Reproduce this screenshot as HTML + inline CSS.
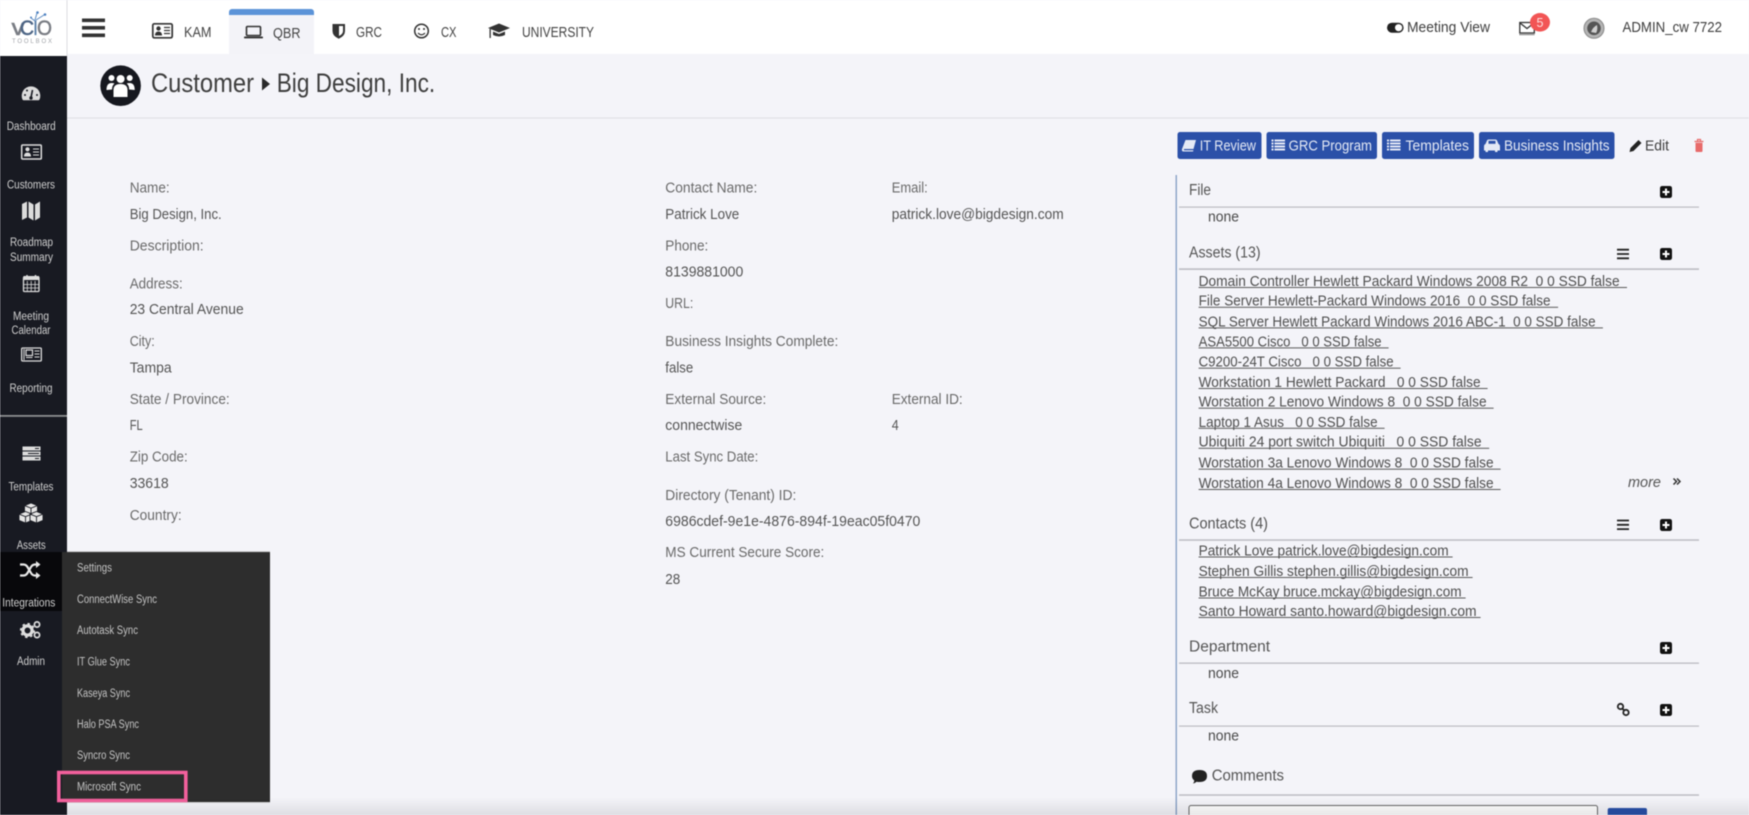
<!DOCTYPE html>
<html lang="en">
<head>
<meta charset="utf-8">
<title>Customer - Big Design, Inc.</title>
<style>
html,body{margin:0;padding:0;width:1749px;height:815px;overflow:hidden;background:#f4f4f9}
svg{display:block;filter:blur(.55px)}
text{font-family:"Liberation Sans",Arial,sans-serif;font-size:14.5px;fill:#5c5c5c;white-space:pre}
.l{fill:#6a6a6a}
.v{fill:#555}
.t{font-size:15.5px;fill:#555}
.n{font-size:14.5px;fill:#4a4a4a}
.tab{font-size:14.5px;fill:#444}
.top{font-size:14.5px;fill:#3e3e3e}
.h{font-size:27px;fill:#3e3e3e}
.s{font-size:11.5px;fill:#cfcfcf;text-anchor:start}
.d{font-size:11.5px;fill:#c4c4c4}
.b{font-size:15px;fill:#e4e9f5}
.a{font-size:14.5px;fill:#4f4f4f}
</style>
</head>
<body>
<svg width="1749" height="815" viewBox="0 0 1749 815" xmlns="http://www.w3.org/2000/svg">
<rect width="1749" height="815" fill="#f4f4f9"/>
<!-- top bar -->
<rect width="1749" height="54" fill="#fff"/>
<rect x="0" y="0" width="67" height="56" fill="#fff"/>
<rect x="66.500" y="0" width="1" height="56" fill="#dcdce0"/>
<!-- logo -->
<text x="11.500" y="35" textLength="13" lengthAdjust="spacingAndGlyphs" style="font-size:22px;fill:#7a7d84;stroke:#7a7d84;stroke-width:.5">v</text>
<text x="20" y="35" textLength="14" lengthAdjust="spacingAndGlyphs" style="font-size:21px;fill:#4d6585;stroke:#4d6585;stroke-width:.5">C</text>
<text x="33" y="35" textLength="5" lengthAdjust="spacingAndGlyphs" style="font-size:21px;fill:#5a7fa8;stroke:#5a7fa8;stroke-width:.3">I</text>
<text x="37" y="35" textLength="15" lengthAdjust="spacingAndGlyphs" style="font-size:21px;fill:#7a7d84;stroke:#7a7d84;stroke-width:.5">O</text>
<path d="M35 20 L37 13 M36 20 L44 15 M31 18 L35 21" stroke="#5b8ac0" stroke-width="1" fill="none"/>
<circle cx="37.500" cy="12.500" r="1.300" fill="#4a7fc0"/><circle cx="45" cy="14.500" r="1.300" fill="#4a7fc0"/><circle cx="31" cy="17.500" r="1" fill="#4a7fc0"/>
<text x="12" y="43" textLength="40" lengthAdjust="spacing" style="font-size:6px;fill:#a0a3a8">TOOLBOX</text>
<!-- hamburger -->
<rect x="82" y="18.500" width="23" height="3.600" fill="#333"/><rect x="82" y="26" width="23" height="3.600" fill="#333"/><rect x="82" y="33.500" width="23" height="3.600" fill="#333"/>
<!-- KAM -->
<rect x="152.800" y="23.800" width="19.400" height="14" rx="1.500" fill="none" stroke="#333" stroke-width="1.700"/>
<circle cx="158.500" cy="28.500" r="2.200" fill="#333"/><path d="M155 35.500 q0-4 3.500-4 t3.500 4z" fill="#333"/>
<path d="M164 27.500h6M164 30.500h6M164 33.500h6" stroke="#333" stroke-width="1.200"/>
<text class="tab" x="184" y="37" textLength="27.500" lengthAdjust="spacingAndGlyphs">KAM</text>
<!-- QBR tab -->
<rect x="229" y="15" width="85" height="39" fill="#f3f3f8"/>
<path d="M229 15 v-3 a3 3 0 0 1 3-3 h79 a3 3 0 0 1 3 3 v3z" fill="#5b93d8"/>
<rect x="246.500" y="26.500" width="14" height="9" rx="1" fill="none" stroke="#333" stroke-width="1.600"/>
<rect x="244" y="36.500" width="19" height="1.900" rx=".8" fill="#333"/>
<text class="tab" x="273" y="38" textLength="27.500" lengthAdjust="spacingAndGlyphs">QBR</text>
<!-- GRC -->
<path d="M332.500 24 h12.500 v7 q0 5-6.250 7.700 q-6.250-2.700-6.250-7.700z" fill="#333"/>
<path d="M339 26 h4 v5 q0 3-4 5z" fill="#fff"/>
<text class="tab" x="356" y="37" textLength="26" lengthAdjust="spacingAndGlyphs">GRC</text>
<!-- CX -->
<circle cx="421.500" cy="31" r="6.800" fill="none" stroke="#333" stroke-width="1.500"/>
<circle cx="419" cy="29" r="1" fill="#333"/><circle cx="424" cy="29" r="1" fill="#333"/>
<path d="M418 33 q3.500 3.500 7 0" fill="none" stroke="#333" stroke-width="1.200"/>
<text class="tab" x="441" y="37" textLength="15.500" lengthAdjust="spacingAndGlyphs">CX</text>
<!-- University -->
<path d="M488 28 L499 23.500 L510 28 L499 32.500z" fill="#333"/>
<path d="M493 31.500 v3.500 q6 3 12 0 v-3.500 l-6 2.500z" fill="#333"/>
<rect x="489.500" y="29" width="1.300" height="9" fill="#333"/>
<text class="tab" x="522" y="37" textLength="72" lengthAdjust="spacingAndGlyphs">UNIVERSITY</text>
<!-- right header -->
<rect x="1387" y="22.700" width="16.600" height="10" rx="5" fill="#222"/><circle cx="1398.600" cy="27.700" r="3.600" fill="#fff"/>
<text class="top" x="1407" y="32" textLength="83" lengthAdjust="spacingAndGlyphs">Meeting View</text>
<rect x="1519.800" y="22.500" width="14.500" height="10.500" fill="none" stroke="#333" stroke-width="1.300"/>
<path d="M1520 23 l7 5.500 l7-5.500" fill="none" stroke="#333" stroke-width="1.300"/>
<path d="M1519.500 34.600h15" stroke="#333" stroke-width="1" stroke-dasharray="1 .6"/>
<ellipse cx="1540" cy="22.300" rx="10" ry="9.300" fill="#f25555"/>
<text x="1536.500" y="27" style="font-size:12.500px;fill:#fde0e0">5</text>
<circle cx="1594" cy="28.300" r="10" fill="#b4b4b4" stroke="#8a8a8a" stroke-width="1"/>
<circle cx="1594" cy="28.300" r="6.800" fill="#555"/><path d="M1591 32 q2-5 6-7 q1 5-1 8z" fill="#d0d0d0"/>
<text class="top" x="1622.500" y="32" textLength="99.500" lengthAdjust="spacingAndGlyphs">ADMIN_cw 7722</text>
<!-- page header -->
<rect x="67" y="117.500" width="1682" height="1" fill="#dfdfe3"/>
<circle cx="120.600" cy="85.700" r="20.300" fill="#16181f"/>
<g fill="#fff">
<circle cx="120.600" cy="79" r="4"/><circle cx="111.500" cy="78" r="3"/><circle cx="129.700" cy="78" r="3"/>
<path d="M113.500 97 v-7 q0-6 7-6 t7 6 v7z"/><path d="M106.500 90 q0-7 5-7 q2 0 3 .5 q-2.500 2-2.500 6z"/><path d="M134.700 90 q0-7-5-7 q-2 0-3 .5 q2.500 2 2.500 6z"/>
</g>
<text class="h" x="151" y="92" textLength="103" lengthAdjust="spacingAndGlyphs">Customer</text>
<path d="M262 77.500 L270 84 L262 90.500z" fill="#2a2a2a"/>
<text class="h" x="276.700" y="92" textLength="158.500" lengthAdjust="spacingAndGlyphs">Big Design, Inc.</text>
<!-- action buttons -->
<rect x="1177.500" y="132" width="84" height="27" rx="2.500" fill="#2b50a8"/>
<rect x="1266.500" y="132" width="110.500" height="27" rx="2.500" fill="#2b50a8"/>
<rect x="1382" y="132" width="92" height="27" rx="2.500" fill="#2b50a8"/>
<rect x="1479" y="132" width="135.500" height="27" rx="2.500" fill="#2b50a8"/>
<path d="M1185.500 140 h10.500 l-2.500 9 h-9 q-1 0-.5 1.300 h9.500 l-.5 1.200 h-10 q-1.500-.5-1-2.500z" fill="#e4e9f5"/>
<text class="b" x="1199.700" y="150.500" textLength="56.300" lengthAdjust="spacingAndGlyphs">IT Review</text>
<path d="M1271.500 140.500h2M1271.500 143.500h2M1271.500 146.500h2M1271.500 149.500h2M1274.500 140.500h10.500M1274.500 143.500h10.500M1274.500 146.500h10.500M1274.500 149.500h10.500" stroke="#e4e9f5" stroke-width="1.900"/>
<text class="b" x="1288.600" y="150.500" textLength="83.400" lengthAdjust="spacingAndGlyphs">GRC Program</text>
<path d="M1387 140.500h2M1387 143.500h2M1387 146.500h2M1387 149.500h2M1390 140.500h10.500M1390 143.500h10.500M1390 146.500h10.500M1390 149.500h10.500" stroke="#e4e9f5" stroke-width="1.900"/>
<text class="b" x="1405.500" y="150.500" textLength="63.500" lengthAdjust="spacingAndGlyphs">Templates</text>
<path d="M1484 150.500 v-4 q0-2 1.500-2.500 l1.500-3.500 q.5-1 1.500-1 h7 q1 0 1.500 1 l1.500 3.500 q1.500 .5 1.500 2.500 v4 h-2.500 v1.500 h-2.500 v-1.500 h-7 v1.500 h-2.500 v-1.500z" fill="#e4e9f5"/>
<rect x="1488.500" y="140.800" width="7" height="3" fill="#2b50a8"/>
<text class="b" x="1504" y="150.500" textLength="105.500" lengthAdjust="spacingAndGlyphs">Business Insights</text>
<path d="M1629.500 152 l1-4 l8-8 l3 3 l-8 8z" fill="#222"/>
<text class="top" x="1645" y="150.500" textLength="24" lengthAdjust="spacingAndGlyphs">Edit</text>
<path d="M1694.500 141.500h9M1697.500 141v-1.500h3v1.500" stroke="#e86a6a" stroke-width="1.200" fill="none"/>
<path d="M1695.500 142.800h7v8.200q0 1-1 1h-5q-1 0-1-1z" fill="#e86a6a"/>
<!-- left column -->
<text class="l" x="129.700" y="192.700" textLength="40" lengthAdjust="spacingAndGlyphs">Name:</text>
<text class="v" x="129.700" y="219" textLength="92" lengthAdjust="spacingAndGlyphs">Big Design, Inc.</text>
<text class="l" x="129.700" y="250.700" textLength="74" lengthAdjust="spacingAndGlyphs">Description:</text>
<text class="l" x="129.700" y="288.700" textLength="53" lengthAdjust="spacingAndGlyphs">Address:</text>
<text class="v" x="129.700" y="314" textLength="114" lengthAdjust="spacingAndGlyphs">23 Central Avenue</text>
<text class="l" x="129.700" y="346" textLength="25" lengthAdjust="spacingAndGlyphs">City:</text>
<text class="v" x="129.700" y="372.700" textLength="42" lengthAdjust="spacingAndGlyphs">Tampa</text>
<text class="l" x="129.700" y="404" textLength="100" lengthAdjust="spacingAndGlyphs">State / Province:</text>
<text class="v" x="129.700" y="430" textLength="13" lengthAdjust="spacingAndGlyphs">FL</text>
<text class="l" x="129.700" y="461.700" textLength="58" lengthAdjust="spacingAndGlyphs">Zip Code:</text>
<text class="v" x="129.700" y="488" textLength="39" lengthAdjust="spacingAndGlyphs">33618</text>
<text class="l" x="129.700" y="520" textLength="52" lengthAdjust="spacingAndGlyphs">Country:</text>
<!-- middle column -->
<text class="l" x="665.300" y="192.700" textLength="92" lengthAdjust="spacingAndGlyphs">Contact Name:</text>
<text class="v" x="665.300" y="219" textLength="74" lengthAdjust="spacingAndGlyphs">Patrick Love</text>
<text class="l" x="665.300" y="250.700" textLength="43" lengthAdjust="spacingAndGlyphs">Phone:</text>
<text class="v" x="665.300" y="276.700" textLength="78" lengthAdjust="spacingAndGlyphs">8139881000</text>
<text class="l" x="665.300" y="308" textLength="28" lengthAdjust="spacingAndGlyphs">URL:</text>
<text class="l" x="665.300" y="346" textLength="173" lengthAdjust="spacingAndGlyphs">Business Insights Complete:</text>
<text class="v" x="665.300" y="372.700" textLength="28" lengthAdjust="spacingAndGlyphs">false</text>
<text class="l" x="665.300" y="404" textLength="101" lengthAdjust="spacingAndGlyphs">External Source:</text>
<text class="v" x="665.300" y="430" textLength="77" lengthAdjust="spacingAndGlyphs">connectwise</text>
<text class="l" x="665.300" y="461.700" textLength="93" lengthAdjust="spacingAndGlyphs">Last Sync Date:</text>
<text class="l" x="665.300" y="500" textLength="131" lengthAdjust="spacingAndGlyphs">Directory (Tenant) ID:</text>
<text class="v" x="665.300" y="526" textLength="255" lengthAdjust="spacingAndGlyphs">6986cdef-9e1e-4876-894f-19eac05f0470</text>
<text class="l" x="665.300" y="557" textLength="159" lengthAdjust="spacingAndGlyphs">MS Current Secure Score:</text>
<text class="v" x="665.300" y="584" textLength="15" lengthAdjust="spacingAndGlyphs">28</text>
<!-- third column -->
<text class="l" x="891.700" y="192.700" textLength="36" lengthAdjust="spacingAndGlyphs">Email:</text>
<text class="v" x="891.700" y="219" textLength="172" lengthAdjust="spacingAndGlyphs">patrick.love@bigdesign.com</text>
<text class="l" x="891.700" y="404" textLength="71" lengthAdjust="spacingAndGlyphs">External ID:</text>
<text class="v" x="891.700" y="430" textLength="7" lengthAdjust="spacingAndGlyphs">4</text>
<!-- right panel -->
<rect x="1175.500" y="175" width="1.500" height="640" fill="#8fa6c9"/>
<g fill="#bcbcc2">
<rect x="1179" y="206.500" width="520" height="1.200"/>
<rect x="1179" y="268.300" width="520" height="1.600"/>
<rect x="1179" y="539.300" width="520" height="1.500"/>
<rect x="1179" y="662.500" width="520" height="1.300"/>
<rect x="1179" y="725.500" width="520" height="1.200"/>
<rect x="1179" y="794.300" width="520" height="1.500"/>
</g>
<text class="t" x="1189" y="195" textLength="22" lengthAdjust="spacingAndGlyphs">File</text>
<text class="n" x="1208" y="221.700" textLength="31" lengthAdjust="spacingAndGlyphs">none</text>
<text class="t" x="1189" y="257.700" textLength="71.600" lengthAdjust="spacingAndGlyphs">Assets (13)</text>
<text class="t" x="1189" y="528.700" textLength="79" lengthAdjust="spacingAndGlyphs">Contacts (4)</text>
<text class="t" x="1189" y="651.700" textLength="81" lengthAdjust="spacingAndGlyphs">Department</text>
<text class="n" x="1208" y="678" textLength="31" lengthAdjust="spacingAndGlyphs">none</text>
<text class="t" x="1189" y="713" textLength="29" lengthAdjust="spacingAndGlyphs">Task</text>
<text class="n" x="1208" y="740.700" textLength="31" lengthAdjust="spacingAndGlyphs">none</text>
<!-- plus icons -->
<g>
<rect x="1660" y="186" width="12" height="12" rx="2.200" fill="#111"/><path d="M1666 188.500v7M1662.500 192h7" stroke="#fff" stroke-width="2"/>
<rect x="1660" y="248" width="12" height="12" rx="2.200" fill="#111"/><path d="M1666 250.500v7M1662.500 254h7" stroke="#fff" stroke-width="2"/>
<rect x="1660" y="519" width="12" height="12" rx="2.200" fill="#111"/><path d="M1666 521.500v7M1662.500 525h7" stroke="#fff" stroke-width="2"/>
<rect x="1660" y="642" width="12" height="12" rx="2.200" fill="#111"/><path d="M1666 644.500v7M1662.500 648h7" stroke="#fff" stroke-width="2"/>
<rect x="1660" y="704" width="12" height="12" rx="2.200" fill="#111"/><path d="M1666 706.500v7M1662.500 710h7" stroke="#fff" stroke-width="2"/>
</g>
<path d="M1617 249.700h12M1617 254h12M1617 258.300h12M1617 520.500h12M1617 524.800h12M1617 529.100h12" stroke="#222" stroke-width="1.800"/>
<g fill="none" stroke="#222" stroke-width="1.800">
<circle cx="1620.500" cy="706.500" r="2.700"/><circle cx="1626" cy="712.500" r="2.700"/><path d="M1622 708.500l2.500 2"/>
</g>
<!-- assets -->
<g class="as">
<text class="a" x="1198.600" y="286" textLength="421" lengthAdjust="spacingAndGlyphs">Domain Controller Hewlett Packard Windows 2008 R2  0 0 SSD false</text>
<text class="a" x="1198.600" y="305.700" textLength="352" lengthAdjust="spacingAndGlyphs">File Server Hewlett-Packard Windows 2016  0 0 SSD false</text>
<text class="a" x="1198.600" y="326.300" textLength="397" lengthAdjust="spacingAndGlyphs">SQL Server Hewlett Packard Windows 2016 ABC-1  0 0 SSD false</text>
<text class="a" x="1198.600" y="346.300" textLength="183" lengthAdjust="spacingAndGlyphs">ASA5500 Cisco   0 0 SSD false</text>
<text class="a" x="1198.600" y="366.500" textLength="195" lengthAdjust="spacingAndGlyphs">C9200-24T Cisco   0 0 SSD false</text>
<text class="a" x="1198.600" y="387" textLength="282" lengthAdjust="spacingAndGlyphs">Workstation 1 Hewlett Packard   0 0 SSD false</text>
<text class="a" x="1198.600" y="406.500" textLength="288" lengthAdjust="spacingAndGlyphs">Worstation 2 Lenovo Windows 8  0 0 SSD false</text>
<text class="a" x="1198.600" y="426.800" textLength="179" lengthAdjust="spacingAndGlyphs">Laptop 1 Asus   0 0 SSD false</text>
<text class="a" x="1198.600" y="446.700" textLength="283" lengthAdjust="spacingAndGlyphs">Ubiquiti 24 port switch Ubiquiti   0 0 SSD false</text>
<text class="a" x="1198.600" y="467.500" textLength="295" lengthAdjust="spacingAndGlyphs">Worstation 3a Lenovo Windows 8  0 0 SSD false</text>
<text class="a" x="1198.600" y="488" textLength="295" lengthAdjust="spacingAndGlyphs">Worstation 4a Lenovo Windows 8  0 0 SSD false</text>
<text class="a" x="1198.600" y="555.500" textLength="250" lengthAdjust="spacingAndGlyphs">Patrick Love patrick.love@bigdesign.com</text>
<text class="a" x="1198.600" y="576" textLength="270" lengthAdjust="spacingAndGlyphs">Stephen Gillis stephen.gillis@bigdesign.com</text>
<text class="a" x="1198.600" y="596.500" textLength="263" lengthAdjust="spacingAndGlyphs">Bruce McKay bruce.mckay@bigdesign.com</text>
<text class="a" x="1198.600" y="616" textLength="278" lengthAdjust="spacingAndGlyphs">Santo Howard santo.howard@bigdesign.com</text>
</g>
<g fill="#5a5a5a">
<rect x="1198.600" y="287" width="428.400" height="1"/>
<rect x="1198.600" y="306.800" width="359.500" height="1"/>
<rect x="1198.600" y="327.400" width="404.300" height="1"/>
<rect x="1198.600" y="347.400" width="190" height="1"/>
<rect x="1198.600" y="367.700" width="202" height="1"/>
<rect x="1198.600" y="388" width="289" height="1"/>
<rect x="1198.600" y="407.700" width="295" height="1"/>
<rect x="1198.600" y="427.800" width="186" height="1"/>
<rect x="1198.600" y="447.800" width="290.600" height="1"/>
<rect x="1198.600" y="468.700" width="302" height="1"/>
<rect x="1198.600" y="489" width="302" height="1"/>
<rect x="1198.600" y="556.500" width="254" height="1"/>
<rect x="1198.600" y="577" width="274" height="1"/>
<rect x="1198.600" y="597.500" width="267" height="1"/>
<rect x="1198.600" y="617" width="282" height="1"/>
</g>
<text x="1628" y="487" textLength="33" lengthAdjust="spacingAndGlyphs" style="font-style:italic;fill:#555">more</text>
<path d="M1673.500 478.500l3 3l-3 3M1677 478.500l3 3l-3 3" fill="none" stroke="#333" stroke-width="1.500"/>
<!-- comments -->
<path d="M1192 776 q0-6 7.500-6 t7.500 6 q0 6-7.500 6 q-1.500 0-3-.3 q-1.500 1.500-3.500 1.800 q1.300-1.500 1.300-3 q-2.300-1.800-2.300-4.500z" fill="#222"/>
<text class="t" x="1211.700" y="780.700" textLength="72.300" lengthAdjust="spacingAndGlyphs">Comments</text>
<rect x="1189" y="805.500" width="408.500" height="20" rx="2" fill="#fff" stroke="#666" stroke-width="1"/>
<rect x="1607.700" y="808" width="39.300" height="20" rx="2" fill="#2850a8"/>
<!-- sidebar -->
<rect x="0" y="56" width="67" height="759" fill="#181a22"/>
<rect x="0" y="415" width="67" height="1.800" fill="#8d8d90"/>
<!-- dashboard -->
<path d="M22.500 99.500 a9.300 9.300 0 1 1 17 0 q-.5 .8-1.200 .8 h-14.600 q-.7 0-1.200-.8z" fill="#dcdcdc"/>
<path d="M31 97.500 L32.500 90" stroke="#181a22" stroke-width="1.600"/><circle cx="31" cy="98" r="1.700" fill="#181a22"/>
<circle cx="25" cy="95" r="1" fill="#181a22"/><circle cx="27" cy="90.500" r="1" fill="#181a22"/><circle cx="37" cy="95" r="1" fill="#181a22"/>
<text class="s" x="6.700" y="130" textLength="49" lengthAdjust="spacingAndGlyphs">Dashboard</text>
<!-- customers -->
<rect x="21.700" y="145" width="19.600" height="14" rx="1" fill="none" stroke="#ddd" stroke-width="1.500"/>
<circle cx="27.500" cy="149.300" r="2.100" fill="#ddd"/><path d="M24 156.500q0-4 3.500-4t3.500 4z" fill="#ddd"/>
<path d="M33 149h6M33 152h6M33 155h6" stroke="#ddd" stroke-width="1.100"/>
<text class="s" x="7" y="188.700" textLength="48" lengthAdjust="spacingAndGlyphs">Customers</text>
<!-- map -->
<path d="M22 204 l5-2.500 v16 l-5 2.500z M28.500 201.500 l5 3 v16 l-5-3z M35 204.500 l5-3 v16 l-5 3z" fill="#dcdcdc"/>
<text class="s" x="10" y="246" textLength="43" lengthAdjust="spacingAndGlyphs">Roadmap</text>
<text class="s" x="10" y="261" textLength="43" lengthAdjust="spacingAndGlyphs">Summary</text>
<!-- calendar -->
<rect x="23.500" y="277" width="15.500" height="14.500" rx="1" fill="none" stroke="#ddd" stroke-width="1.300"/>
<rect x="23.500" y="276" width="15.500" height="4" fill="#ddd"/>
<path d="M27 275v3M35.500 275v3" stroke="#ddd" stroke-width="1.500"/>
<path d="M27.300 281v10M31.200 281v10M35.100 281v10M23.500 284.500h15.500M23.500 288h15.500" stroke="#ddd" stroke-width=".8"/>
<text class="s" x="13" y="320" textLength="36" lengthAdjust="spacingAndGlyphs">Meeting</text>
<text class="s" x="11.500" y="334" textLength="39" lengthAdjust="spacingAndGlyphs">Calendar</text>
<!-- reporting -->
<rect x="21.700" y="348" width="19.600" height="13" rx="1" fill="none" stroke="#ddd" stroke-width="1.300"/>
<rect x="26" y="350" width="6.500" height="5.500" fill="none" stroke="#ddd" stroke-width="1.200"/>
<path d="M24 349v11M26 357.500h6.500M34.500 351h5M34.500 354h5M34.500 357h5" stroke="#ddd" stroke-width="1"/>
<text class="s" x="9.500" y="392" textLength="43" lengthAdjust="spacingAndGlyphs">Reporting</text>
<!-- templates -->
<g fill="#ddd"><rect x="22.500" y="446.500" width="18" height="4"/><rect x="22.500" y="451.500" width="18" height="4"/><rect x="22.500" y="456.500" width="18" height="4"/></g>
<path d="M35 448.500h4M28 453.500h11M35 458.500h4" stroke="#181a22" stroke-width="1"/>
<text class="s" x="8.500" y="490.700" textLength="45" lengthAdjust="spacingAndGlyphs">Templates</text>
<!-- assets -->
<g fill="#e6e6e6" stroke="#181a22" stroke-width=".9">
<path d="M31 503 l6.500 2.600 v6.800 l-6.500 2.600 l-6.500-2.600 v-6.800z"/>
<path d="M25.500 511.500 l6.500 2.600 v6.300 l-6.500 2.600 l-6.500-2.600 v-6.300z"/>
<path d="M36.500 511.500 l6.500 2.600 v6.300 l-6.500 2.600 l-6.500-2.600 v-6.300z"/>
</g>
<path d="M24.500 505.600 L31 508.200 L37.500 505.600 M31 508.200 V515 M19 514.100 L25.500 516.700 L32 514.100 M25.500 516.700 V523 M30 514.100 L36.500 516.700 L43 514.100 M36.500 516.700 V523" fill="none" stroke="#181a22" stroke-width=".9"/>
<text class="s" x="16.700" y="549" textLength="29" lengthAdjust="spacingAndGlyphs">Assets</text>
<!-- integrations active -->
<rect x="0" y="552" width="62" height="59" fill="#08080b"/>
<path d="M20 564.500 h3.500 q2.500 0 4 2.500 l3.500 6 q1.500 2.500 4 2.500 h1.500 M20 575.500 h3.500 q2.500 0 4-2.500 l3.500-6 q1.500-2.500 4-2.500 h1.500" fill="none" stroke="#e8e8e8" stroke-width="2.200"/>
<path d="M36 561 l4.500 3.500 l-4.500 3.500z M36 572 l4.500 3.500 l-4.500 3.500z" fill="#e8e8e8"/>
<text class="s" x="2.300" y="606.700" textLength="53" lengthAdjust="spacingAndGlyphs">Integrations</text>
<!-- admin -->
<circle cx="27.500" cy="630.500" r="4.600" fill="none" stroke="#ddd" stroke-width="3.300"/>
<circle cx="27.500" cy="630.500" r="6.800" fill="none" stroke="#ddd" stroke-width="1.600" stroke-dasharray="2.500 2.800"/>
<circle cx="37" cy="624.500" r="2.600" fill="none" stroke="#ddd" stroke-width="1.700"/>
<circle cx="37" cy="635" r="2.600" fill="none" stroke="#ddd" stroke-width="1.700"/>
<text class="s" x="17" y="665" textLength="28" lengthAdjust="spacingAndGlyphs">Admin</text>
<!-- dropdown -->
<rect x="62" y="552" width="208" height="250" fill="#2d2d2d"/>
<rect x="67" y="551.300" width="203" height=".8" fill="#bbb"/>
<rect x="67" y="802" width="203" height=".8" fill="#ccc"/>
<text class="d" x="77" y="571.700" textLength="35" lengthAdjust="spacingAndGlyphs">Settings</text>
<text class="d" x="77" y="603" textLength="80" lengthAdjust="spacingAndGlyphs">ConnectWise Sync</text>
<text class="d" x="77" y="634" textLength="61" lengthAdjust="spacingAndGlyphs">Autotask Sync</text>
<text class="d" x="77" y="665.700" textLength="53" lengthAdjust="spacingAndGlyphs">IT Glue Sync</text>
<text class="d" x="77" y="697" textLength="53" lengthAdjust="spacingAndGlyphs">Kaseya Sync</text>
<text class="d" x="77" y="728" textLength="62" lengthAdjust="spacingAndGlyphs">Halo PSA Sync</text>
<text class="d" x="77" y="759" textLength="53" lengthAdjust="spacingAndGlyphs">Syncro Sync</text>
<text class="d" x="77" y="790.700" textLength="64" lengthAdjust="spacingAndGlyphs">Microsoft Sync</text>
<rect x="58.800" y="772.500" width="127" height="28" fill="none" stroke="#f2609c" stroke-width="3.600"/>
<!-- bottom shade -->
<defs><linearGradient id="sh" x1="0" y1="0" x2="0" y2="1"><stop offset="0" stop-color="#000" stop-opacity="0"/><stop offset="1" stop-color="#000" stop-opacity=".09"/></linearGradient></defs>
<rect x="67" y="797" width="1682" height="18" fill="url(#sh)"/>
</svg>
</body>
</html>
